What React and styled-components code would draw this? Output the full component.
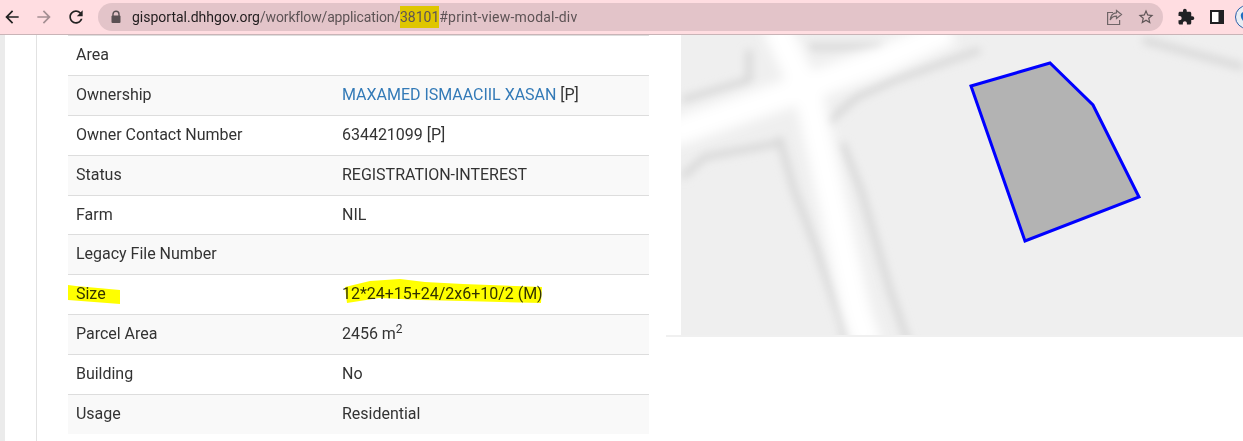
import styled, { createGlobalStyle } from "styled-components";

const GlobalStyle = createGlobalStyle`
  html, body {
    margin: 0;
    height: 100%;
    overflow: hidden;
    background: #fff;
    font-family: Roboto, "Liberation Sans", sans-serif;
    color: #333;
  }
`;

const Toolbar = styled.header`
  display: flex;
  align-items: center;
  gap: 7px;
  height: 34px;
  background: #ffdde1;
  border-bottom: 1px solid #c9b4b7;
  overflow: hidden;
`;

const NavGroup = styled.div`
  display: flex;
  gap: 8px;
  margin-right: 3px;
`;

const IconSlot = styled.span`
  display: flex;
  align-items: center;
  justify-content: center;
  flex: none;
  width: 24px;
  height: 24px;
  color: ${(p) => p.$color || "#222"};
`;

const AddressBar = styled.div`
  display: flex;
  align-items: center;
  flex: none;
  width: 1065px;
  height: 28px;
  margin-right: 4px;
  padding: 0 5px 0 6px;
  box-sizing: border-box;
  border-radius: 14px;
  background: #e3c4c9;
`;

const Url = styled.span`
  margin-left: 4px;
  font-size: 14px;
  color: #5d5355;
  white-space: nowrap;
`;

const Host = styled.span`
  color: #201c1d;
`;

const UrlPath = styled.span`
  letter-spacing: -0.15px;
`;

const UrlHash = styled.span`
  letter-spacing: 0.2px;
`;

const Marked = styled.span`
  background: #dfc600;
  padding: 3px 0;
`;

const BarActions = styled.div`
  display: flex;
  gap: 8px;
  margin-left: auto;
`;

const Avatar = styled.svg`
  flex: none;
  width: 24px;
  height: 24px;
  margin-left: -1px;
`;

const Page = styled.main`
  display: flex;
  height: 406px;
`;

const Gutter = styled.div`
  flex: none;
  width: 5px;
  background: #ebebeb;
`;

const Rail = styled.div`
  flex: none;
  width: 31px;
  border-right: 1px solid #e2e2e2;
`;

const Content = styled.div`
  display: flex;
  align-items: flex-start;
  gap: 17px;
  padding-left: 31px;
`;

const Table = styled.table`
  flex: none;
  width: 581px;
  margin-top: 0.2px;
  border-collapse: collapse;
  table-layout: fixed;
  font-size: 16px;
  line-height: 22.857px;
`;

const Row = styled.tr`
  background: ${(p) => (p.$striped ? "#f9f9f9" : "#fff")};
`;

const Cell = styled.td`
  position: relative;
  width: ${(p) => p.$width || "auto"};
  padding: 8px;
  border-top: 1px solid #ddd;
  letter-spacing: -0.02px;
`;

const OwnerLink = styled.a`
  color: #337ab7;
  text-decoration: none;
`;

const Sup = styled.sup`
  font-size: 12px;
  line-height: 0;
`;

const Scribble = styled.svg`
  position: absolute;
  top: 0;
  left: 0;
  width: 100%;
  height: 100%;
  mix-blend-mode: multiply;
  pointer-events: none;
`;

const MapColumn = styled.section`
  flex: none;
  width: 577px;
  padding-left: 15px;
  box-sizing: border-box;
  border-bottom: 2px solid #f0f0f0;
`;

const MapView = styled.svg`
  display: block;
  width: 562px;
  height: 300px;
`;

const BackIcon = () => (
  <svg width="20" height="20" viewBox="0 0 24 24" fill="currentColor">
    <path d="M20 11H7.83l5.59-5.59L12 4l-8 8 8 8 1.41-1.41L7.83 13H20v-2z" />
  </svg>
);

const ForwardIcon = () => (
  <svg width="20" height="20" viewBox="0 0 24 24" fill="currentColor">
    <path d="M4 11h12.17l-5.59-5.59L12 4l8 8-8 8-1.41-1.41L16.17 13H4v-2z" />
  </svg>
);

const ReloadIcon = () => (
  <svg width="20" height="20" viewBox="0 0 24 24" fill="currentColor">
    <path d="M17.65 6.35C16.2 4.9 14.21 4 12 4c-4.42 0-7.99 3.58-7.99 8s3.57 8 7.99 8c3.73 0 6.84-2.55 7.73-6h-2.08c-.82 2.33-3.04 4-5.65 4-3.31 0-6-2.69-6-6s2.69-6 6-6c1.66 0 3.14.69 4.22 1.78L13 11h7V4l-2.35 2.35z" />
  </svg>
);

const LockIcon = () => (
  <svg width="12" height="14" viewBox="0 0 12 14">
    <path d="M3 6V4.2a3 3 0 0 1 6 0V6" fill="none" stroke="#5a5053" strokeWidth="1.4" />
    <rect x="1.5" y="5.5" width="9" height="7.5" rx="1" fill="#5a5053" />
  </svg>
);

const ShareIcon = () => (
  <svg width="17" height="17" viewBox="0 0 17 17" fill="none" stroke="#6f6567" strokeWidth="1.2">
    <path d="M7 3.5H1.6v12h12V11" />
    <path d="M10.5 1.5 15.5 5.5 10.5 9.5V7.2C7.5 7.2 5.5 8.5 4.2 11 4.6 7.2 6.8 4 10.5 3.8Z" />
  </svg>
);

const StarIcon = () => (
  <svg width="18" height="18" viewBox="0 0 24 24" fill="#5f5557">
    <path d="M22 9.24l-7.19-.62L12 2 9.19 8.63 2 9.24l5.46 4.73L5.82 21 12 17.27 18.18 21l-1.63-7.03L22 9.24zM12 15.4l-3.76 2.27 1-4.28-3.32-2.88 4.38-.38L12 6.1l1.71 4.04 4.38.38-3.32 2.88 1 4.28L12 15.4z" />
  </svg>
);

const ExtensionIcon = () => (
  <svg width="18" height="18" viewBox="0 0 24 24" fill="#202124">
    <path d="M20.5 11H19V7c0-1.1-.9-2-2-2h-4V3.5C13 2.12 11.88 1 10.5 1S8 2.12 8 3.5V5H4c-1.1 0-1.99.9-1.99 2v3.8H3.5c1.49 0 2.7 1.21 2.7 2.7s-1.21 2.7-2.7 2.7H2V20c0 1.1.9 2 2 2h3.8v-1.5c0-1.49 1.21-2.7 2.7-2.7 1.49 0 2.7 1.21 2.7 2.7V22H17c1.1 0 2-.9 2-2v-4h1.5c1.38 0 2.5-1.12 2.5-2.5S21.88 11 20.5 11z" />
  </svg>
);

const SidePanelIcon = () => (
  <svg width="14" height="14" viewBox="0 0 14 14">
    <rect width="14" height="14" fill="#202124" />
    <rect x="2" y="2" width="6.5" height="10" fill="#fff" />
  </svg>
);

const rows = [
  { label: "Area", value: "" },
  { label: "Ownership", value: <><OwnerLink href="#owner">MAXAMED ISMAACIIL XASAN</OwnerLink> [P]</> },
  { label: "Owner Contact Number", value: "634421099 [P]" },
  { label: "Status", value: "REGISTRATION-INTEREST" },
  { label: "Farm", value: "NIL" },
  { label: "Legacy File Number", value: "" },
  {
    label: "Size",
    value: "12*24+15+24/2x6+10/2 (M)",
    labelMark: "0,10 8,11 52,15 52,29 0,25",
    valueMark: "11,12 36,6 66,4 91,7 129,9 208,12 207,28 129,26 87,25 45,23 13,28",
  },
  { label: "Parcel Area", value: <>2456 m<Sup>2</Sup></> },
  { label: "Building", value: "No" },
  { label: "Usage", value: "Residential" },
];

const roads = [
  "M670 134 L790 93 L883 60 L950 30",
  "M775 25 L809 97 L857 313 L868 345",
];

const shadows = [
  "M682 177 L705 157 L779 143",
  "M779 137 L794 190 L816 247 L842 323 L846 345",
  "M842 143 L861 190 L890 290 L909 345",
  "M682 100 L749 80 L749 50",
  "M809 47 L883 47",
  "M827 123 L857 97 L894 80 L980 50",
  "M1143 40 L1243 67",
];

const ParcelMap = () => (
  <MapView viewBox="681 35 562 300" aria-label="Parcel map">
    <defs>
      <filter id="soft" x="-20%" y="-20%" width="140%" height="140%">
        <feGaussianBlur stdDeviation="6" />
      </filter>
      <filter id="softer" x="-20%" y="-20%" width="140%" height="140%">
        <feGaussianBlur stdDeviation="4" />
      </filter>
      <clipPath id="frame">
        <rect x="681" y="35" width="562" height="300" />
      </clipPath>
    </defs>
    <rect x="681" y="35" width="562" height="300" fill="#efefef" />
    <g clipPath="url(#frame)" fill="none" strokeLinejoin="round">
      <g filter="url(#softer)">
        {shadows.map((d) => (
          <path key={d} d={d} stroke="#d8d8d8" strokeWidth="7" />
        ))}
      </g>
      <g filter="url(#soft)">
        {roads.map((d) => (
          <path key={d} d={d} stroke="#ffffff" strokeWidth="28" />
        ))}
      </g>
    </g>
    <polygon
      points="971,86 1050,63 1093,105 1139,197 1025,241"
      fill="#b3b3b3"
      stroke="#0000ff"
      strokeWidth="3"
    />
  </MapView>
);

export default function App() {
  return (
    <>
      <GlobalStyle />
      <Toolbar>
        <NavGroup>
          <IconSlot><BackIcon /></IconSlot>
          <IconSlot $color="#a58f93"><ForwardIcon /></IconSlot>
          <IconSlot><ReloadIcon /></IconSlot>
        </NavGroup>
        <AddressBar>
          <IconSlot><LockIcon /></IconSlot>
          <Url>
            <Host>gisportal.dhhgov.org</Host>
            <UrlPath>/workflow/application/</UrlPath>
            <Marked>38101</Marked>
            <UrlHash>#print-view-modal-div</UrlHash>
          </Url>
          <BarActions>
            <IconSlot><ShareIcon /></IconSlot>
            <IconSlot><StarIcon /></IconSlot>
          </BarActions>
        </AddressBar>
        <IconSlot><ExtensionIcon /></IconSlot>
        <IconSlot><SidePanelIcon /></IconSlot>
        <Avatar viewBox="0 0 24 24">
          <circle cx="12" cy="12" r="11.5" fill="#e9eef4" stroke="#2a5ea8" strokeWidth="1" />
          <path d="M6 9c3-4 7-3 9 0 1 3-1 7-4 8-3 0-6-4-5-8z" fill="#1f6fc0" />
        </Avatar>
      </Toolbar>
      <Page>
        <Gutter />
        <Rail />
        <Content>
          <Table>
            <tbody>
              {rows.map((row, i) => (
                <Row key={row.label} $striped={i % 2 === 1}>
                  <Cell $width="250px">
                    {row.label}
                    {row.labelMark && (
                      <Scribble><polygon points={row.labelMark} fill="#ffff00" /></Scribble>
                    )}
                  </Cell>
                  <Cell>
                    {row.value}
                    {row.valueMark && (
                      <Scribble><polygon points={row.valueMark} fill="#ffff00" /></Scribble>
                    )}
                  </Cell>
                </Row>
              ))}
            </tbody>
          </Table>
          <MapColumn>
            <ParcelMap />
          </MapColumn>
        </Content>
      </Page>
    </>
  );
}
